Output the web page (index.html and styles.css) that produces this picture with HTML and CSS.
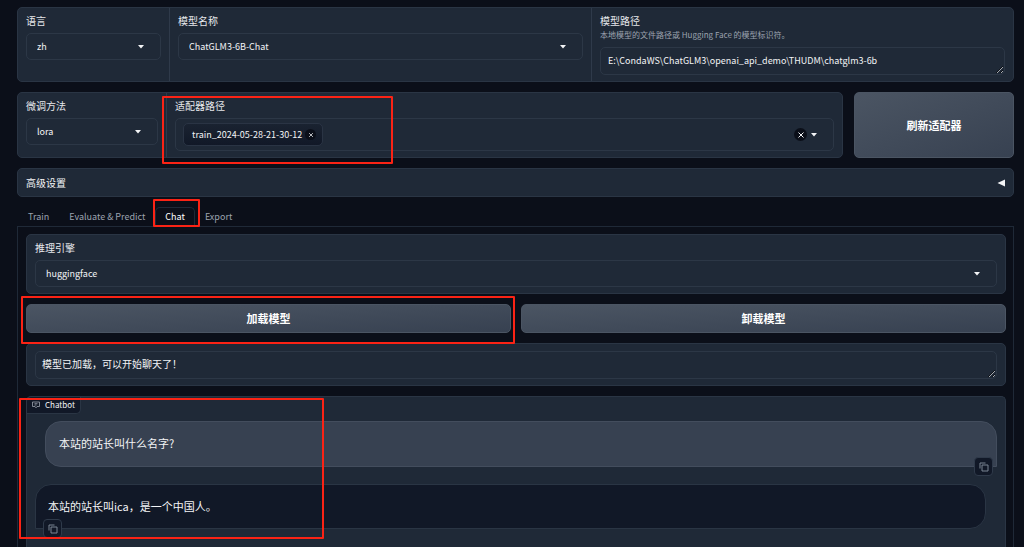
FILE: index.html
```html
<!DOCTYPE html>
<html lang="zh">
<head>
<meta charset="utf-8">
<title>LLaMA Board</title>
<link rel="stylesheet" href="styles.css">
</head>
<body>
<svg class="sprite">
  <symbol id="caret" viewBox="0 0 8 4"><path d="M1 0h6L4 3.6z" fill="currentColor"/></symbol>
  <symbol id="cross" viewBox="0 0 8 8"><path d="M1.5 1.5l5 5M6.500 1.500l-5 5" stroke="currentColor" fill="none"/></symbol>
  <symbol id="copy" viewBox="0 0 10 10"><path d="M3 3h6v6H3zM1 6.500V1h5.500" stroke="currentColor" fill="none"/></symbol>
</svg>
<main class="app">
  <section class="group model-row">
    <div class="block">
      <label for="lang">语言</label>
      <div class="dropdown"><select id="lang"><option>zh</option></select><svg class="caret"><use href="#caret"/></svg></div>
    </div>
    <div class="block">
      <label for="model">模型名称</label>
      <div class="dropdown"><select id="model"><option>ChatGLM3-6B-Chat</option></select><svg class="caret"><use href="#caret"/></svg></div>
    </div>
    <div class="block path">
      <label for="path">模型路径</label>
      <p class="info">本地模型的文件路径或 Hugging Face 的模型标识符。</p>
      <textarea id="path" rows="1" spellcheck="false">E:\CondaWS\ChatGLM3\openai_api_demo\THUDM\chatglm3-6b</textarea>
    </div>
  </section>

  <section class="adapter-row">
    <div class="group adapter">
      <div class="block">
        <label for="method">微调方法</label>
        <div class="dropdown"><select id="method"><option>lora</option></select><svg class="caret"><use href="#caret"/></svg></div>
      </div>
      <div class="block">
        <label for="adapter">适配器路径</label>
        <div class="multi">
          <span class="token">train_2024-05-28-21-30-12
            <button class="round small" type="button" aria-label="Remove"><svg><use href="#cross"/></svg></button></span>
          <input id="adapter" type="text">
          <button class="round" type="button" aria-label="Clear"><svg><use href="#cross"/></svg></button>
          <svg class="caret-inline"><use href="#caret"/></svg>
        </div>
      </div>
    </div>
    <button class="action" type="button">刷新适配器</button>
  </section>

  <button class="group accordion" type="button"><span>高级设置</span><svg viewBox="0 0 8 8"><path d="M8 0.500v7L0.500 4z" fill="currentColor"/></svg></button>

  <section class="tabs">
    <nav class="tab-list">
      <button type="button">Train</button>
      <button type="button">Evaluate &amp; Predict</button>
      <button type="button" class="selected">Chat</button>
      <button type="button">Export</button>
    </nav>
    <div class="panel">
      <div class="group block">
        <label for="engine">推理引擎</label>
        <div class="dropdown"><select id="engine"><option>huggingface</option></select><svg class="caret"><use href="#caret"/></svg></div>
      </div>
      <div class="actions">
        <button class="action" type="button">加载模型</button>
        <button class="action" type="button">卸载模型</button>
      </div>
      <div class="group block status">
        <textarea rows="1" aria-label="状态">模型已加载，可以开始聊天了！</textarea>
      </div>
      <div class="group chatbot">
        <div class="chat-label"><svg viewBox="0 0 8 8"><path d="M.5 1h7v4.500H5L4 6.800 3 5.500H.5zM2.500 2.700h3M2.500 4h2" stroke="currentColor" stroke-width=".8" fill="none"/></svg>Chatbot</div>
        <div class="message user">本站的站长叫什么名字?<button class="copy" type="button" aria-label="Copy"><svg><use href="#copy"/></svg></button></div>
        <div class="message bot">本站的站长叫ica，是一个中国人。<button class="copy" type="button" aria-label="Copy"><svg><use href="#copy"/></svg></button></div>
      </div>
    </div>
  </section>
</main>
<div class="mark mark-adapter"></div>
<div class="mark mark-tab"></div>
<div class="mark mark-load"></div>
<div class="mark mark-chat"></div>
</body>
</html>
```

FILE: styles.css
```css
* { box-sizing: border-box; }
body {
  margin: 0;
  position: relative;
  background: #0b0f19;
  color: #f3f4f6;
  font: 9px/12px "Noto Sans CJK SC", sans-serif;
}
button, select, input, textarea {
  font: inherit;
  color: inherit;
  margin: 0;
  border: 0;
  background: none;
}
svg { display: block; }
.sprite { display: none; }
.app {
  display: flex;
  flex-direction: column;
  gap: 10px;
  min-height: 100vh;
  padding: 7px 10px 0 17px;
}
.group {
  background: #1f2937;
  border: 1px solid #2a3544;
  border-radius: 5px;
}
.block { padding: 7px 8px 6px; }
label { display: block; font-size: 10px; color: #e5e7eb; margin-bottom: 6px; width: max-content; }
.info { margin: -4px 0 6px; font-size: 8px; color: #9ca3af; }

.model-row { display: grid; grid-template-columns: 151px 1fr 1fr; }
.model-row .block + .block, .adapter .block + .block { border-left: 1px solid #2f3a4a; }
.adapter-row { display: grid; grid-template-columns: 1fr 160px; gap: 11px; }
.adapter { display: grid; grid-template-columns: 148px 1fr; }

.dropdown { position: relative; }
.dropdown select {
  display: block;
  appearance: none;
  width: 100%;
  height: 27px;
  padding: 0 24px 0 10px;
  border: 1px solid #2c3746;
  border-radius: 5px;
}
.caret { position: absolute; right: 16px; top: 12px; width: 8px; height: 4px; }
.caret-inline { width: 8px; height: 4px; }
.multi {
  display: flex;
  align-items: center;
  gap: 3px;
  height: 33px;
  padding: 0 15px 0 7px;
  border: 1px solid #2c3746;
  border-radius: 5px;
}
.multi input { flex: 1; min-width: 0; }
.token {
  display: flex;
  align-items: center;
  gap: 3px;
  height: 23px;
  padding: 0 6px 0 8px;
  border: 1px solid #2a3444;
  border-radius: 5px;
  background: linear-gradient(#1a2331, #111827);
}
.round {
  display: grid;
  place-items: center;
  width: 13px;
  height: 13px;
  padding: 0;
  border-radius: 50%;
  background: #0b0f19;
}
.round svg { width: 8px; height: 8px; }
.small { width: 11px; height: 11px; }
.small svg { width: 6px; height: 6px; }
textarea {
  display: block;
  width: 100%;
  height: 28px;
  padding: 7px;
  border: 1px solid #2c3746;
  border-radius: 5px;
  overflow: hidden;
  resize: vertical;
}
.action {
  border: 1px solid #4b5563;
  border-radius: 5px;
  background: linear-gradient(to bottom right, #4b5563, #374151);
  color: #fff;
  font-size: 11px;
  font-weight: 700;
}
.accordion {
  display: flex;
  align-items: center;
  justify-content: space-between;
  height: 29px;
  padding: 0 8px;
  font-size: 10px;
}
.accordion svg { width: 8px; height: 8px; }

.tabs { display: flex; flex-direction: column; flex: 1; }
.tab-list { display: flex; padding-left: 1px; }
.tab-list button {
  height: 19px;
  padding: 0 9px;
  border: 1px solid transparent;
  border-bottom: 0;
  border-radius: 5px 5px 0 0;
  color: #9ca3af;
}
.tab-list .selected { color: #fff; border-color: #1f2937; }
.panel {
  display: flex;
  flex: 1;
  flex-direction: column;
  gap: 10px;
  padding: 7px 7px 0 8px;
  border: 1px solid #1f2937;
  border-bottom: 0;
}
.actions { display: grid; grid-template-columns: 1fr 1fr; gap: 10px; }
.actions .action { height: 29px; padding: 0 0 2px; }
.status textarea { font-size: 10px; padding: 6px; }

.chatbot {
  flex: 1;
  border-bottom: 0;
  border-radius: 5px 5px 0 0;
  padding: 0 8px;
}
.chat-label {
  display: flex;
  align-items: center;
  gap: 5px;
  width: max-content;
  height: 17px;
  margin: 0 0 7px -8px;
  padding: 0 5px;
  border: 1px solid #2a3544;
  border-width: 0 1px 1px 0;
  border-radius: 5px 0 5px 0;
  background: #111827;
  font-size: 8px;
}
.chat-label svg { width: 8px; height: 8px; color: #9ca3af; }
.message {
  position: relative;
  padding: 13px 13px 15px;
  border: 1px solid #434d5d;
  border-radius: 16px;
  font-size: 11px;
  line-height: 16px;
}
.user { margin: 0 0 17px 10px; background: #374151; border-bottom-right-radius: 0; }
.bot { margin-right: 11px; padding: 13px 12px 14px; background: #111827; border-color: #2a3544; border-bottom-left-radius: 0; }
.copy {
  position: absolute;
  display: grid;
  place-items: center;
  width: 19px;
  height: 19px;
  padding: 0;
  bottom: -10px;
  border: 1px solid #2f3a4a;
  border-radius: 4px;
  background: #111827;
  color: #7b8493;
}
.copy svg { width: 10px; height: 10px; }
.user .copy { right: 3px; }
.bot .copy { left: 7px; }

.mark { position: absolute; border: 2px solid #fb2315; border-radius: 1px; pointer-events: none; }
.mark-adapter { left: 162px; top: 96px; width: 231px; height: 68px; }
.mark-tab { left: 153px; top: 199px; width: 47px; height: 28px; }
.mark-load { left: 21px; top: 296px; width: 494px; height: 48px; }
.mark-chat { left: 19px; top: 398px; width: 305px; height: 141px; }
```
